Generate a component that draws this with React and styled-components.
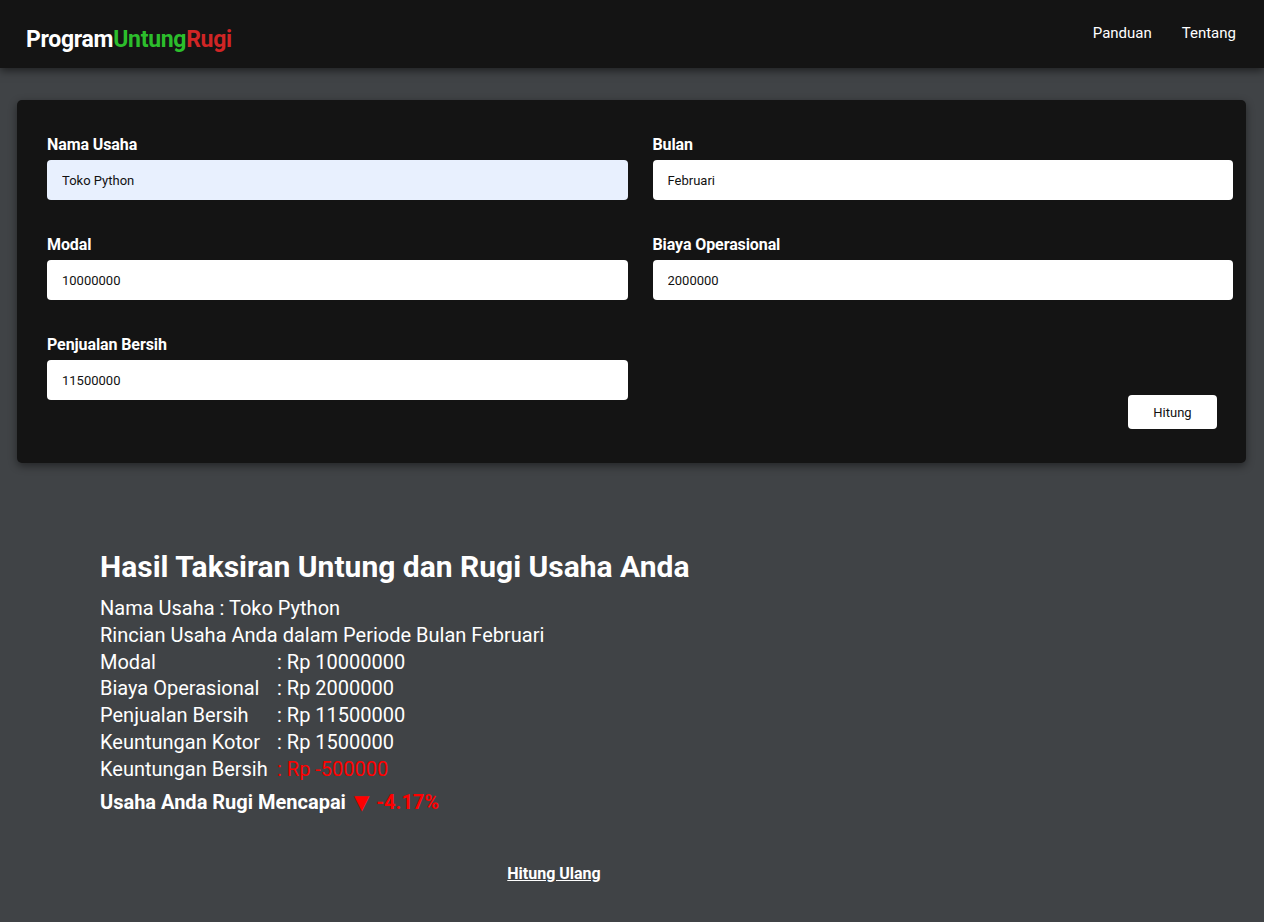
import React from 'react';
import styled, { createGlobalStyle } from 'styled-components';

const GlobalStyle = createGlobalStyle`
  html, body {
    margin: 0;
    padding: 0;
    background: #404346;
    font-family: Roboto, "Liberation Sans", sans-serif;
    color: #fff;
  }
  * { box-sizing: border-box; }
`;

const Navbar = styled.header`
  height: 68px;
  background: #141414;
  box-shadow: 0 3px 8px rgba(0, 0, 0, 0.5);
  display: flex;
  justify-content: space-between;
  padding: 0 28px 0 26px;
  position: relative;
  z-index: 2;
`;

const Brand = styled.div`
  font-size: 23px;
  font-weight: 700;
  padding-top: 26px;
  letter-spacing: -0.3px;
`;

const BrandPart = styled.span`
  color: ${p => p.$color};
`;

const NavLinks = styled.nav`
  display: flex;
  gap: 30px;
  padding-top: 24px;
  font-size: 15px;
`;

const NavLink = styled.a`
  color: #fff;
  text-decoration: none;
`;

const Main = styled.main`
  padding: 32px 18px 0 17px;
`;

const Card = styled.section`
  background: #141414;
  border-radius: 5px;
  box-shadow: 0 3px 8px rgba(0, 0, 0, 0.45);
  padding: 36px 13px 63px 30px;
`;

const FormGrid = styled.div`
  display: grid;
  grid-template-columns: 1fr 1fr;
  column-gap: 25px;
  row-gap: 36px;
`;

const Field = styled.div`
  display: flex;
  flex-direction: column;
  gap: 6px;
`;

const Label = styled.label`
  font-size: 16px;
  font-weight: 700;
  letter-spacing: -0.1px;
  line-height: 18px;
`;

const Input = styled.input`
  height: 40px;
  border: none;
  border-radius: 4px;
  padding: 0 15px;
  font-family: Roboto, "Liberation Sans", sans-serif;
  font-size: 13px;
  color: #111;
  background: ${p => (p.$filled ? '#e8f0fe' : '#fff')};
  outline: none;
`;

const ButtonCell = styled.div`
  display: flex;
  justify-content: flex-end;
  align-items: flex-end;
  padding-right: 16px;
  margin-bottom: -29px;
`;

const Button = styled.button`
  width: 89px;
  height: 34px;
  border: none;
  border-radius: 4px;
  background: #fff;
  color: #111;
  font-family: Roboto, "Liberation Sans", sans-serif;
  font-size: 13px;
`;

const Result = styled.section`
  width: 908px;
  margin: 0 0 0 83px;
  padding-top: 86px;
`;

const Heading = styled.h2`
  margin: 0 0 10px;
  font-size: 30px;
  font-weight: 700;
  line-height: 36px;
`;

const Line = styled.div`
  font-size: 20px;
  line-height: 26.8px;
`;

const Key = styled.span`
  display: inline-block;
  width: 177px;
  color: #fff;
`;

const Value = styled.span`
  color: ${p => (p.$loss ? '#ff0000' : '#fff')};
`;

const Summary = styled.div`
  margin-top: 8px;
  font-size: 20px;
  font-weight: 700;
  line-height: 22px;
`;

const Percent = styled.span`
  color: #ff0000;
  font-weight: 700;
`;

const Arrow = styled.span`
  font-size: 20px;
  font-family: "DejaVu Sans", sans-serif;
  margin: 0 2px 0 3px;
`;

const Again = styled.div`
  text-align: center;
  margin-top: 51px;
  font-size: 16px;
  font-weight: 700;
`;

const AgainLink = styled.a`
  color: #fff;
  text-decoration: underline;
`;

const rows = [
  ['Modal', ': Rp 10000000'],
  ['Biaya Operasional', ': Rp 2000000'],
  ['Penjualan Bersih', ': Rp 11500000'],
  ['Keuntungan Kotor', ': Rp 1500000'],
];

export default function App() {
  return (
    <>
      <GlobalStyle />
      <Navbar>
        <Brand>
          <BrandPart $color="#ffffff">Program</BrandPart>
          <BrandPart $color="#2cbe2c">Untung</BrandPart>
          <BrandPart $color="#d02525">Rugi</BrandPart>
        </Brand>
        <NavLinks>
          <NavLink href="#">Panduan</NavLink>
          <NavLink href="#">Tentang</NavLink>
        </NavLinks>
      </Navbar>
      <Main>
        <Card>
          <FormGrid>
            <Field>
              <Label>Nama Usaha</Label>
              <Input $filled defaultValue="Toko Python" />
            </Field>
            <Field>
              <Label>Bulan</Label>
              <Input defaultValue="Februari" />
            </Field>
            <Field>
              <Label>Modal</Label>
              <Input defaultValue="10000000" />
            </Field>
            <Field>
              <Label>Biaya Operasional</Label>
              <Input defaultValue="2000000" />
            </Field>
            <Field>
              <Label>Penjualan Bersih</Label>
              <Input defaultValue="11500000" />
            </Field>
            <ButtonCell>
              <Button>Hitung</Button>
            </ButtonCell>
          </FormGrid>
        </Card>
        <Result>
          <Heading>Hasil Taksiran Untung dan Rugi Usaha Anda</Heading>
          <Line>Nama Usaha : Toko Python</Line>
          <Line>Rincian Usaha Anda dalam Periode Bulan Februari</Line>
          {rows.map(([k, v]) => (
            <Line key={k}>
              <Key>{k}</Key>
              <Value>{v}</Value>
            </Line>
          ))}
          <Line>
            <Key>Keuntungan Bersih</Key>
            <Value $loss>: Rp -500000</Value>
          </Line>
          <Summary>
            Usaha Anda Rugi Mencapai <Percent><Arrow>▼</Arrow> -4.17%</Percent>
          </Summary>
          <Again>
            <AgainLink href="#">Hitung Ulang</AgainLink>
          </Again>
        </Result>
      </Main>
    </>
  );
}
